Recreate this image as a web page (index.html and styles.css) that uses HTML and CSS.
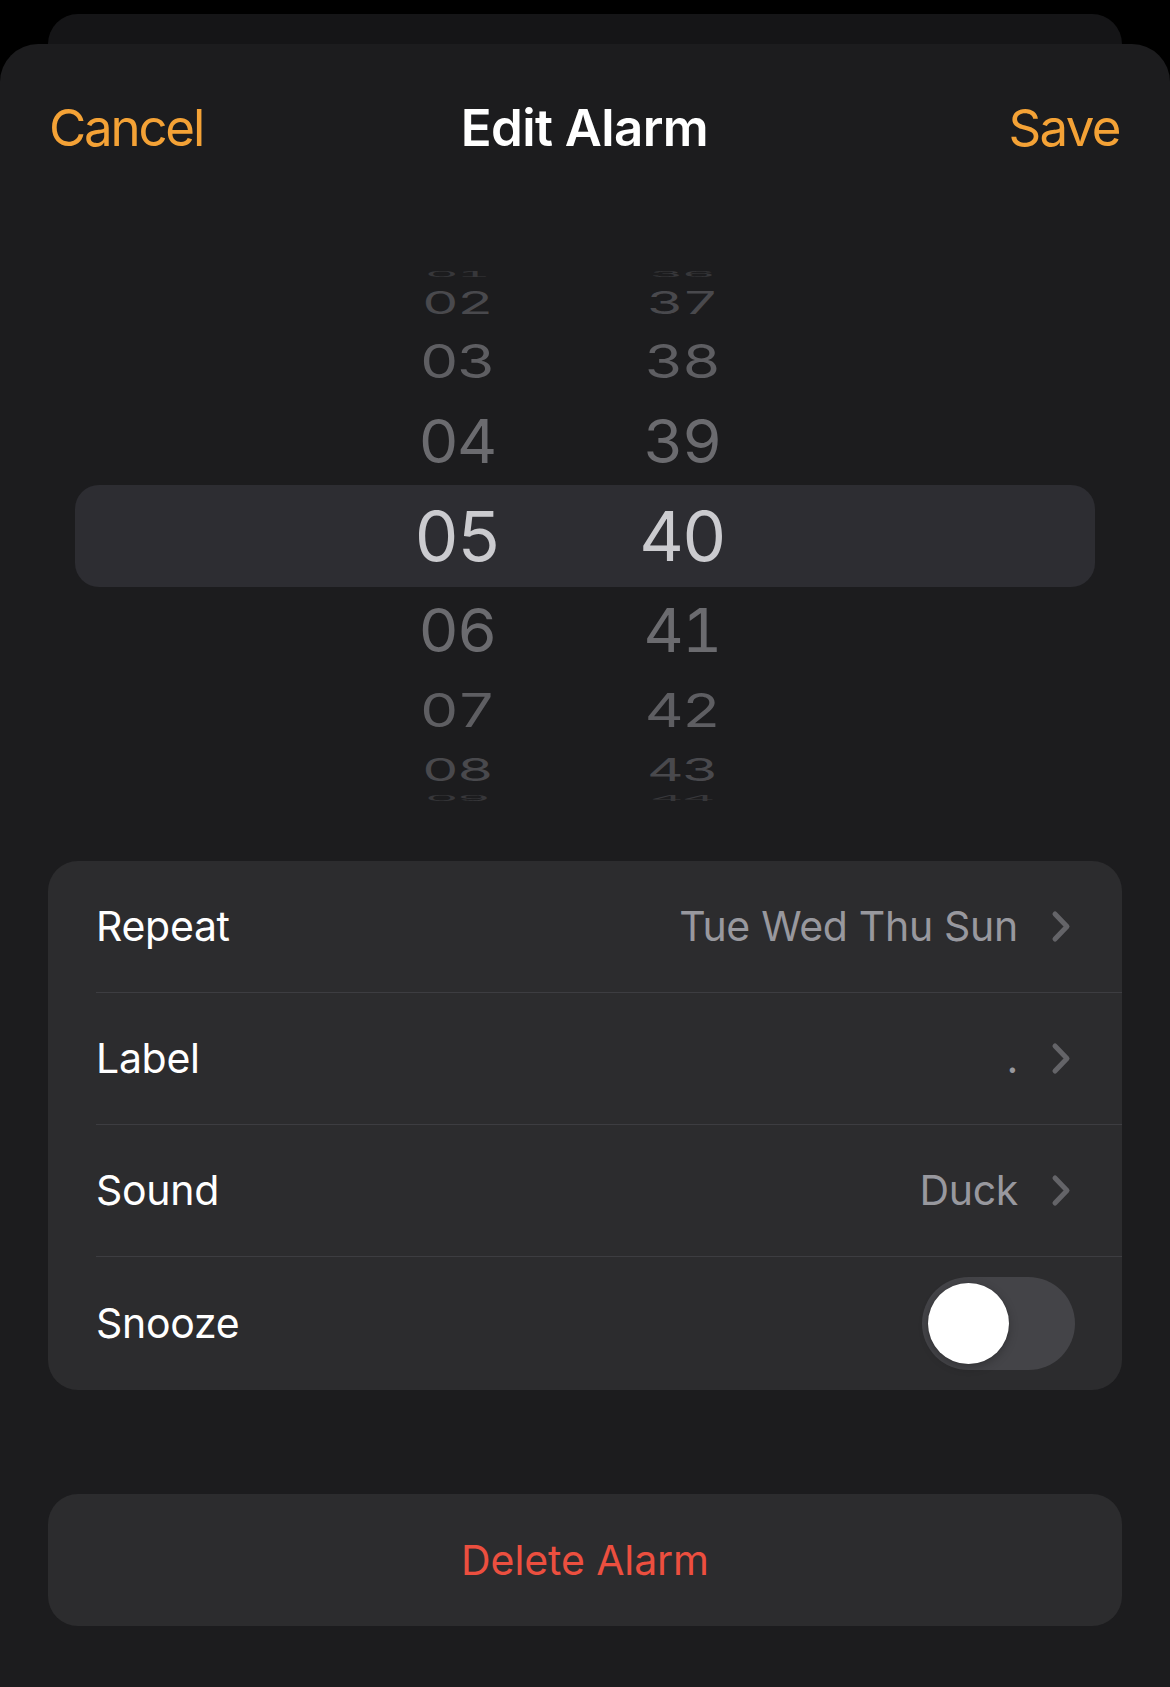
FILE: index.html
```html
<!DOCTYPE html>
<html lang="en">
<head>
<meta charset="utf-8">
<title>Edit Alarm</title>
<link rel="stylesheet" href="styles.css">
</head>
<body>
  <div class="back-card"></div>
  <main class="sheet">
    <header class="nav">
      <span class="nav-btn nav-left">Cancel</span>
      <h1 class="nav-title">Edit Alarm</h1>
      <span class="nav-btn nav-right">Save</span>
    </header>

    <section class="picker">
      <div class="wheel-row h4"><span class="cell d4">01</span><span class="cell d4">36</span></div>
      <div class="wheel-row h3"><span class="cell d3">02</span><span class="cell d3">37</span></div>
      <div class="wheel-row h2"><span class="cell d2">03</span><span class="cell d2">38</span></div>
      <div class="wheel-row h1"><span class="cell d1">04</span><span class="cell d1">39</span></div>
      <div class="wheel-row h0 selected"><span class="cell d0">05</span><span class="cell d0">40</span></div>
      <div class="wheel-row h1"><span class="cell d1">06</span><span class="cell d1">41</span></div>
      <div class="wheel-row h2"><span class="cell d2">07</span><span class="cell d2">42</span></div>
      <div class="wheel-row h3"><span class="cell d3">08</span><span class="cell d3">43</span></div>
      <div class="wheel-row h4"><span class="cell d4">09</span><span class="cell d4">44</span></div>
    </section>

    <section class="group">
      <div class="row">
        <div class="row-inner">
          <span class="row-label">Repeat</span>
          <span class="row-value">Tue Wed Thu Sun</span>
          <svg class="chevron" width="20" height="33" viewBox="0 0 20 33"><path d="M4 4 L16 16.5 L4 29"/></svg>
        </div>
      </div>
      <div class="row">
        <div class="row-inner">
          <span class="row-label">Label</span>
          <span class="row-value">.</span>
          <svg class="chevron" width="20" height="33" viewBox="0 0 20 33"><path d="M4 4 L16 16.5 L4 29"/></svg>
        </div>
      </div>
      <div class="row">
        <div class="row-inner">
          <span class="row-label">Sound</span>
          <span class="row-value">Duck</span>
          <svg class="chevron" width="20" height="33" viewBox="0 0 20 33"><path d="M4 4 L16 16.5 L4 29"/></svg>
        </div>
      </div>
      <div class="row last">
        <div class="row-inner toggle-row">
          <span class="row-label">Snooze</span>
          <span class="switch"><span class="knob"></span></span>
        </div>
      </div>
    </section>

    <button class="delete">Delete Alarm</button>
  </main>
</body>
</html>
```

FILE: styles.css
```css
* { box-sizing: border-box; }

html, body {
  margin: 0;
  padding: 0;
  background: #000;
}

body {
  font-family: Inter, "Noto Sans", "Liberation Sans", sans-serif;
  -webkit-font-smoothing: antialiased;
}

.back-card {
  margin: 14px 48px 0;
  height: 30px;
  background: #151517;
  border-radius: 32px 32px 0 0;
}

.sheet {
  background: #1c1c1e;
  border-radius: 38px 38px 0 0;
  min-height: 1643px;
  padding-bottom: 62px;
}

/* nav */
.nav {
  height: 166px;
  display: grid;
  grid-template-columns: 1fr auto 1fr;
  align-items: center;
  padding: 0 50px 0 49px;
}

.nav-btn {
  color: #f4a236;
  font-size: 51px;
  line-height: 1;
  letter-spacing: -2.2px;
}

.nav-left { justify-self: start; }
.nav-right { justify-self: end; letter-spacing: -1.6px; }

.nav-title {
  margin: 0;
  color: #fff;
  font-size: 51px;
  line-height: 1;
  font-weight: 600;
  letter-spacing: -0.6px;
}

/* picker */
.picker {
  margin: 58px 75px 0;
  display: flex;
  flex-direction: column;
}

.wheel-row {
  display: flex;
  justify-content: center;
  align-items: center;
  gap: 65px;
  padding-right: 31px;
}

.wheel-row.h0 { height: 102px; }
.wheel-row.h1 { height: 87px; }
.wheel-row.h2 { height: 73px; }
.wheel-row.h3 { height: 45px; }
.wheel-row.h4 { height: 12px; }

.wheel-row.selected {
  background: #2d2d32;
  border-radius: 24px;
}

.cell {
  width: 160px;
  text-align: center;
  font-size: 69px;
  line-height: 1;
  letter-spacing: -2px;
  font-variant-numeric: tabular-nums;
  flex: none;
}

.cell.d0 { color: #cbcbcf; }
.cell.d1 { color: #6b6b6f; transform: scale(0.9, 0.87); }
.cell.d2 { color: #5e5e62; transform: scale(0.87, 0.67); }
.cell.d3 { color: #49494d; transform: scale(0.82, 0.46); }
.cell.d4 { color: #37373a; transform: scale(0.75, 0.1); }

/* grouped list */
.group {
  margin: 57px 48px 0;
  background: #2c2c2e;
  border-radius: 30px;
  overflow: hidden;
}

.row {
  padding-left: 48px;
}

.row-inner {
  height: 132px;
  display: flex;
  align-items: center;
  border-bottom: 1px solid #3d3d41;
  padding-right: 51px;
}

.row.last .row-inner {
  height: 133px;
  border-bottom: none;
  padding-right: 47px;
}

.row-label {
  color: #fff;
  font-size: 41px;
  line-height: 1;
  letter-spacing: -0.3px;
  flex: 1;
}

.row-value {
  color: #98989e;
  font-size: 41px;
  line-height: 1;
  letter-spacing: -0.3px;
  margin-right: 33px;
}

.chevron {
  display: block;
  flex: none;
}

.chevron path {
  fill: none;
  stroke: #646468;
  stroke-width: 5;
  stroke-linecap: round;
  stroke-linejoin: round;
}

/* switch */
.switch {
  width: 153px;
  height: 93px;
  border-radius: 47px;
  background: #444448;
  padding: 6px;
  display: flex;
  align-items: center;
  flex: none;
}

.knob {
  width: 81px;
  height: 81px;
  border-radius: 50%;
  background: #fff;
  box-shadow: 0 3px 10px rgba(0, 0, 0, 0.25), 0 0 0 1px rgba(0, 0, 0, 0.05);
}

/* delete */
.delete {
  display: block;
  width: calc(100% - 96px);
  margin: 104px 48px 0;
  height: 132px;
  border: none;
  border-radius: 30px;
  background: #2c2c2e;
  color: #ec4f3f;
  font-family: inherit;
  font-size: 41px;
  line-height: 1;
  letter-spacing: -0.1px;
  padding: 0;
}
```
